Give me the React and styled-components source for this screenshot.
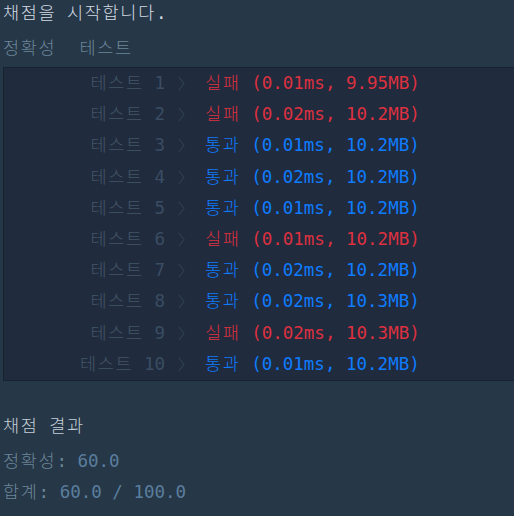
import React from 'react';
import styled, { createGlobalStyle } from 'styled-components';

const GlobalStyle = createGlobalStyle`
  html, body {
    margin: 0;
    padding: 0;
    background: #263747;
    overflow: hidden;
  }
  body {
    font-family: "DejaVu Sans Mono", "Noto Sans CJK KR", monospace;
    font-size: 17.5px;
  }
`;

const Terminal = styled.div`
  min-height: 516px;
  padding-left: 3px;
  background: #263747;
  color: #d2dae2;
`;

const Line = styled.div`
  line-height: ${({ h }) => h || 31}px;
  margin-top: ${({ mt }) => mt || 0}px;
  color: ${({ color }) => color || '#d2dae2'};
  white-space: pre;
`;

// hangul in the reference sits on full-width cells
const Ko = styled.span`
  font-family: "Noto Sans CJK KR", sans-serif;
  font-weight: 300;
  letter-spacing: 1.7px;
  line-height: 1;
`;

const TabRow = styled.div`
  display: flex;
  gap: 23px;
  margin-top: 6px;
  line-height: 32px;
  color: #6c8699;
`;

const Tab = styled.span`
  line-height: 32px;
`;

const ResultBox = styled.div`
  margin-top: 3px;
  margin-right: -6px;
  background: #202b3d;
  border: 1px solid #18222f;
`;

const Row = styled.div`
  display: grid;
  grid-template-columns: 161px 40px 1fr;
  align-items: center;
  height: 31.2px;
  line-height: 31.2px;
  white-space: pre;
`;

const Label = styled.span`
  text-align: right;
  color: #435568;
`;

const Num = styled.span`
  color: #3a4d63;
`;

const Chevron = styled.span`
  display: flex;
  align-items: center;
  padding-left: 13px;
  color: #2f3e51;
`;

const Result = styled.span`
  color: ${({ pass }) => (pass ? '#0f7cff' : '#dd3140')};
`;

const Value = styled.span`
  color: #5a7e9e;
`;

const tests = [
  { pass: false, time: '0.01ms', mem: '9.95MB' },
  { pass: false, time: '0.02ms', mem: '10.2MB' },
  { pass: true, time: '0.01ms', mem: '10.2MB' },
  { pass: true, time: '0.02ms', mem: '10.2MB' },
  { pass: true, time: '0.01ms', mem: '10.2MB' },
  { pass: false, time: '0.01ms', mem: '10.2MB' },
  { pass: true, time: '0.02ms', mem: '10.2MB' },
  { pass: true, time: '0.02ms', mem: '10.3MB' },
  { pass: false, time: '0.02ms', mem: '10.3MB' },
  { pass: true, time: '0.01ms', mem: '10.2MB' },
];

const ChevronIcon = () => (
  <svg width="7" height="15" viewBox="0 0 7 15" fill="none">
    <path d="M0.8 0.8 L6 7.5 L0.8 14.2" stroke="currentColor" strokeWidth="1.2" />
  </svg>
);

const App = () => (
  <Terminal>
    <GlobalStyle />
    <Line h={26}>
      <Ko>채점을</Ko> <Ko>시작합니다</Ko>.
    </Line>
    <TabRow>
      <Tab><Ko>정확성</Ko></Tab>
      <Tab><Ko>테스트</Ko></Tab>
    </TabRow>
    <ResultBox>
      {tests.map((t, i) => (
        <Row key={i}>
          <Label>
            <Ko>테스트</Ko> <Num>{i + 1}</Num>
          </Label>
          <Chevron>
            <ChevronIcon />
          </Chevron>
          <Result pass={t.pass}>
            <Ko>{t.pass ? '통과' : '실패'}</Ko> ({t.time}, {t.mem})
          </Result>
        </Row>
      ))}
    </ResultBox>
    <Line mt={30} color="#c4ced8">
      <Ko>채점</Ko> <Ko>결과</Ko>
    </Line>
    <Line mt={4} color="#6c8699">
      <Ko>정확성</Ko>: <Value>60.0</Value>
    </Line>
    <Line color="#6c8699">
      <Ko>합계</Ko>: <Value>60.0 / 100.0</Value>
    </Line>
  </Terminal>
);

export default App;
